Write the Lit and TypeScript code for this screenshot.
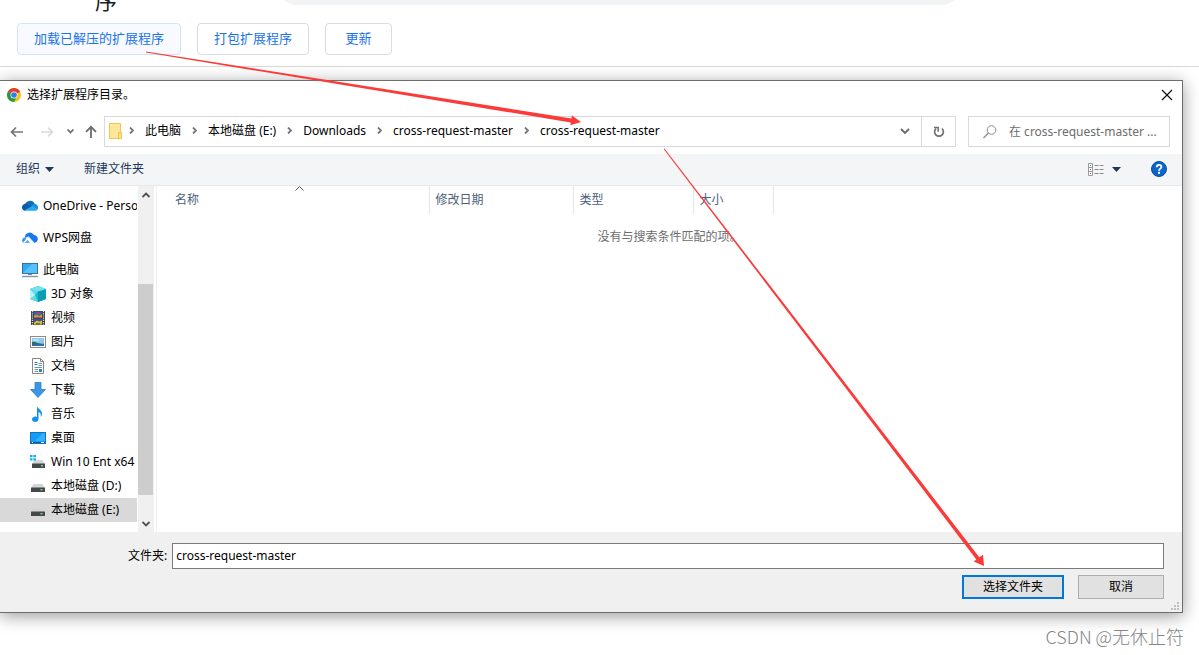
import { LitElement, html, css, svg } from "lit";
import { customElement, property } from "lit/decorators.js";

const icons: Record<string, unknown> = {
  onedrive: svg`<path d="M6 3.2a4.8 4.8 0 0 1 6.6 2.6L9 9 3.4 5.6A4.8 4.8 0 0 1 6 3.2z" fill="#0f6cbd"/><path d="M0 10.2a4 4 0 0 1 5.5-4.3l5 3-8 3.8A3.8 3.8 0 0 1 0 10.2z" fill="#0a5ba8"/><path d="M9.5 8l2.8-2.3c2.3 0 3.7 1.8 3.7 3.8 0 .8-.2 1.4-.6 2z" fill="#1490df"/><path d="M2 12.6L10 8l5.6 3.2c-.6 1-1.5 1.6-2.8 1.6H4c-.8 0-1.4 0-2-.2z" fill="#28a8ea"/>`,
  wps: svg`<path d="M3 7.500A4.800 4.800 0 0 1 12 5a4 4 0 0 1 3.500 5.500c-.5 1.500-2 2.500-4 2.500L6 7z" fill="#1677f0"/><path d="M0 10.500A3.300 3.300 0 0 1 4.500 7.500L2 12.800A3 3 0 0 1 0 10.500z" fill="#3d95ff"/><path d="M2 13L5.300 9.500 8 13z" fill="#5aa8ff"/><path d="M6 6.500l6 6.500M5.600 9L2 12.500" stroke="#fff" stroke-width="1.100"/>`,
  pc: svg`<rect x=".5" y="1.5" width="15" height="10" fill="#2fa8f6" stroke="#3b7299"/><path d="M1 11L10 2h5v9z" fill="#58c1ff"/><path d="M6 12h4v1H6z" fill="#6f8796"/><path d="M0 14.5h16" stroke="#7b97a9" stroke-width="1.4"/>`,
  cube: svg`<path d="M8 0l8 3v10l-8 3-8-3V3z" fill="#1ebbd0"/><path d="M8 5l8-2v10l-8 3z" fill="#079fb6"/><path d="M0 3l8-3 8 3-8 2.4z" fill="#74e3ee"/><path d="M0 3l8 2.3L5 9l3 7-8-3z" fill="#65d8e5"/><path d="M0 3l5 6-5 4z" fill="#b9f2f5"/>`,
  video: svg`<rect x="1" y="1" width="14" height="14" fill="#3d3d40"/><path d="M2.5 1v14M13.5 1v14" stroke="#d8d8d8" stroke-width="1.3" stroke-dasharray="1.2 1"/><rect x="4" y="1.5" width="8" height="6" fill="#2467b5"/><path d="M4 5.500l3-1L9 6l3-2v3.500H4z" fill="#e38b28"/><path d="M7 2.500h3v1.500H7z" fill="#e6362d"/><rect x="4" y="8.500" width="8" height="6" fill="#3152a8"/><path d="M4 12.500l3-2 2 1 3-1v4H4z" fill="#f1b12b"/><path d="M6 13h4v1.500H6z" fill="#3b8d35"/>`,
  picture: svg`<rect x=".5" y="2.500" width="15" height="11" fill="#fff" stroke="#8d8d8d"/><rect x="2" y="4" width="12" height="8" fill="#8cc9f2"/><path d="M2 8c3-1 4 .5 6 1s4 1 6 .5V12H2z" fill="#2f6f68"/><path d="M2 11c4-1 8-1 12-1v2H2z" fill="#2f6fb0"/><path d="M3 5.500h6v1H3z" fill="#e4f4ff"/>`,
  doc: svg`<path d="M2.500.5h8l3 3v12h-11z" fill="#fff" stroke="#858585"/><path d="M10.500.5v3h3" fill="none" stroke="#858585"/><path d="M4.500 6.500h3M4.500 4.500h3" stroke="#237fc4"/><path d="M8.500 5.500H12M8.500 7.500H12M4.500 9.500H12M4.500 11.500H8M4.500 13.500H8" stroke="#6d93b3"/><rect x="9" y="11" width="3" height="3" fill="#2c82c8"/>`,
  download: svg`<path d="M5 .5h6v7h4.500L8 15.500.5 7.500H5z" fill="#3b97e3" stroke="#2c7cc4" stroke-width=".8"/>`,
  music: svg`<path d="M7 0c.5 3 5.500 3.500 5 8.500-.2 1.200-.8 2-1.500 2.500 1-3-.5-4.500-2-5V13c0 4-6.500 3.500-6.500.5C2 11 5 10 7 11z" fill="#1093ec"/>`,
  desktop: svg`<rect x=".5" y="2.500" width="15" height="11" fill="#139bf5" stroke="#1374bd"/><path d="M5 11L13 3h2v8z" fill="#36b1ff"/><path d="M1 12.500h14" stroke="#0b5d9d"/><path d="M2 12.500h1M11 12.500h3" stroke="#fff"/>`,
  drive: svg`<path d="M3.500 6h9L15 10H1z" fill="#d5d5d7"/><rect x="1" y="9.500" width="14" height="4.500" rx=".5" fill="#45474a"/><rect x="10.500" y="11" width="2" height="1.500" fill="#5fe06d"/>`,
  windrive: svg`<path d="M4.500 6h8L15 10H2z" fill="#d5d5d7"/><rect x="2" y="9.500" width="13" height="4.500" rx=".5" fill="#45474a"/><rect x="11" y="11" width="2" height="1.500" fill="#5fe06d"/><path d="M0 1h2.500v2.300H0zM3.300 1H6v2.300H3.300zM0 4.200h2.500v2.300H0zM3.300 4.200H6v2.300H3.300z" fill="#13b0f0"/>`,
  help: svg`<circle cx="8" cy="8" r="7.500" fill="#0a66c8" stroke="#074f9d"/><path d="M5.700 6.300c0-3.400 4.900-3.200 4.700-.3C10.300 7.600 8 7.700 8 9.700" fill="none" stroke="#fff" stroke-width="1.800"/><rect x="7" y="10.800" width="2" height="2" fill="#fff"/>`,
  view: svg`<path d="M.5 2.500h4v12h-4zM.5 6.500h4M.5 10.500h4" fill="#fff" stroke="#9a9a9a"/><path d="M2 4.500h1" stroke="#3c87d0"/><path d="M2 8.500h1" stroke="#3c87d0"/><path d="M2 12.500h1" stroke="#d33"/><path d="M6.500 4.500h4M11.500 4.500h4M6.500 8.500h4M11.500 8.500h4M6.500 12.500h4M11.500 12.500h4" stroke="#8a8a8a"/>`,
  back: svg`<path d="M14 8H2.500M7 3.500L2.500 8 7 12.500" fill="none" stroke="#757575" stroke-width="1.700"/>`,
  forward: svg`<path d="M2 8h11.500M9 3.500L13.500 8 9 12.500" fill="none" stroke="#dadada" stroke-width="1.700"/>`,
  up: svg`<path d="M8 14V2.800M3 7.800l5-5 5 5" fill="none" stroke="#6c6c6c" stroke-width="1.800"/>`,
  folder: svg`<path d="M1.500.5h11v15h-11z" fill="#ffe69b" stroke="#f0c64c"/><path d="M10.500 9.500h3v6h-3z" fill="#ffe08a" stroke="#f0c64c"/>`,
  refresh: svg`<path d="M5 4.500A4.400 4.400 0 1 0 11 4.500" fill="none" stroke="#707070" stroke-width="1.700"/><path d="M3 3.500h4.200v4.200" fill="none" stroke="#707070" stroke-width="1.500"/>`,
  search: svg`<circle cx="9.500" cy="6" r="4.300" fill="none" stroke="#8b8b8b"/><path d="M6.500 9l-5 5" stroke="#8b8b8b" stroke-width="1.300"/>`,
  close: svg`<path d="M3 3l10 10M13 3L3 13" stroke="#111" stroke-width="1.200"/>`,
  chrome: svg`<circle cx="8" cy="8" r="7" fill="#fbc116"/><path d="M8 8L1.940 4.500A7 7 0 0 1 14.060 4.500z" fill="#e33b2e"/><path d="M1.940 4.500A7 7 0 0 0 8 15l3-5.300L8 8z" fill="#279847"/><path d="M8 4.500h6.060L8 8z" fill="#e33b2e"/><circle cx="8" cy="8" r="3.500" fill="#fff"/><circle cx="8" cy="8" r="2.800" fill="#2f7de9"/>`,
};

@customElement("ui-icon")
class UiIcon extends LitElement {
  @property() name = "";
  static styles = css`
    :host { display: block; flex: none; width: 16px; height: 16px; }
    svg { display: block; }
  `;
  render() {
    return html`<svg width="16" height="16" viewBox="0 0 16 16" aria-hidden="true">${icons[this.name]}</svg>`;
  }
}

const chevron = (d: string, w: number, h: number, color: string) => html`
  <svg width=${w} height=${h} viewBox="0 0 ${w} ${h}" aria-hidden="true">
    <path d=${d} fill="none" stroke=${color} stroke-width="1.8"></path>
  </svg>`;

const caret = () => html`
  <svg width="9" height="5" viewBox="0 0 9 5" aria-hidden="true"><path d="M0 0h9L4.500 5z" fill="#1e395b"></path></svg>`;

const crumbs = ["此电脑", "本地磁盘 (E:)", "Downloads", "cross-request-master", "cross-request-master"];

const roots = [
  { icon: "onedrive", label: "OneDrive - Personal" },
  { icon: "wps", label: "WPS网盘" },
];

const places = [
  { icon: "cube", label: "3D 对象" },
  { icon: "video", label: "视频" },
  { icon: "picture", label: "图片" },
  { icon: "doc", label: "文档" },
  { icon: "download", label: "下载" },
  { icon: "music", label: "音乐" },
  { icon: "desktop", label: "桌面" },
  { icon: "windrive", label: "Win 10 Ent x64" },
  { icon: "drive", label: "本地磁盘 (D:)" },
  { icon: "drive", label: "本地磁盘 (E:)", selected: true },
];

@customElement("folder-dialog")
class FolderDialog extends LitElement {
  static styles = css`
    :host {
      display: block;
      background: #fff;
      border: 1px solid #6e6e6e;
      border-left: 0;
      box-shadow: 0 3px 16px rgba(0, 0, 0, 0.4);
      color: #000;
      font-size: 12px;
      line-height: 16px;
    }
    * { box-sizing: border-box; }
    button, input { font: inherit; color: inherit; }
    svg { display: block; flex: none; }
    .plain { display: flex; align-items: center; gap: 5px; border: 0; padding: 0; background: none; white-space: nowrap; }
    .title { display: flex; align-items: center; height: 28px; padding: 0 7px 0 6px; gap: 5px; }
    .title h2 { flex: 1; margin: 0; font-size: 12px; font-weight: 400; }
    .nav { display: flex; align-items: center; padding: 7px 12px 7px 9px; }
    .history { display: flex; align-items: center; gap: 14px; width: 95px; }
    .history .recent { width: 6px; margin-left: -2px; }
    .history .parent { margin-left: -4px; }
    .address { flex: 1; min-width: 0; display: flex; height: 31px; border: 1px solid #d9d9d9; }
    .path { flex: 1; min-width: 0; display: flex; align-items: center; gap: 11px; margin: 0; padding: 0 0 2px 3px; list-style: none; overflow: hidden; }
    .path li { display: flex; align-items: center; gap: 11px; white-space: nowrap; }
    .path .lead { width: 10px; }
    .drop { width: 32px; justify-content: center; }
    .reload { width: 34px; justify-content: center; border-left: 1px solid #d9d9d9; }
    .search { display: flex; align-items: center; width: 202px; height: 31px; margin-left: 12px; padding: 0 0 0 13px; border: 1px solid #d9d9d9; gap: 11px; }
    .search input { flex: 1; min-width: 0; border: 0; padding: 0; outline: 0; background: none; }
    .search input::placeholder { color: #6d6d6d; opacity: 1; }
    .tools { display: flex; align-items: center; height: 32px; padding: 0 15px 1px 16px; gap: 30px; background: #f4f5f7; border-bottom: 1px solid #e7e8ea; color: #1e395b; }
    .tools .end { margin-left: auto; gap: 8px; }
    .body { display: flex; height: 346px; }
    .side { width: 137px; overflow: hidden; padding-top: 8px; }
    .tree { margin: 0; padding: 0; list-style: none; }
    .node { display: flex; align-items: center; height: 24px; padding-left: 22px; gap: 5px; white-space: nowrap; color: #000; text-decoration: none; }
    .root { margin-bottom: 8px; }
    .child { padding-left: 30px; }
    .selected { background: #d9d9d9; }
    .scroll { display: flex; flex-direction: column; align-items: center; width: 16px; margin: 0 2px 0 1px; padding: 6px 0 5px; background: #f0f0f0; }
    .space { flex: 86; }
    .thumb { flex: 211; width: 16px; background: #cdcdcd; border-right: 1px solid #f0f0f0; }
    .gap { flex: 26; }
    .files { flex: 1; min-width: 0; border-left: 1px solid #f0f0f0; }
    table { width: 100%; table-layout: fixed; border-collapse: collapse; }
    th { height: 28px; padding: 0 0 0 6px; text-align: left; font-weight: 400; color: #4c607a; border-right: 1px solid #e5e5e5; position: relative; }
    th:first-child { padding-left: 18px; }
    th:last-child { border: 0; }
    .sort { position: absolute; top: 0; left: 138px; }
    .name { width: 272px; }
    .date { width: 144px; }
    .type { width: 120px; }
    .size { width: 80px; }
    .empty { height: 46px; padding: 0; text-align: center; color: #6d6d6d; }
    .foot { position: relative; padding: 11px 18px 13px 128px; background: #f0f0f0; }
    .field { display: flex; align-items: center; gap: 5px; }
    .field input { flex: 1; min-width: 0; height: 26px; padding: 0 3px 2px; border: 1px solid #7a7a7a; background: #fff; outline: 0; border-radius: 0; }
    .actions { display: flex; justify-content: flex-end; gap: 14px; margin-top: 6px; }
    .action { width: 86px; height: 24px; padding: 0; background: #e1e1e1; border: 1px solid #adadad; }
    .primary { width: 102px; border: 2px solid #0078d7; }
    .grip { position: absolute; right: 3px; bottom: 2px; }
  `;

  private node(item: { icon: string; label: string; selected?: boolean }, kind: string) {
    return html`<li>
      <a class="node ${kind} ${item.selected ? "selected" : ""}" href="#">
        <ui-icon name=${item.icon}></ui-icon><span>${item.label}</span>
      </a>
    </li>`;
  }

  render() {
    return html`
      <div class="title">
        <ui-icon name="chrome"></ui-icon>
        <h2>选择扩展程序目录。</h2>
        <button class="plain" aria-label="关闭"><ui-icon name="close"></ui-icon></button>
      </div>
      <div class="nav">
        <div class="history">
          <button class="plain" aria-label="后退"><ui-icon name="back"></ui-icon></button>
          <button class="plain" aria-label="前进"><ui-icon name="forward"></ui-icon></button>
          <button class="plain recent" aria-label="最近">${chevron("M.5 .5L3.5 3.500 6.500 .5", 7, 5, "#757575")}</button>
          <button class="plain parent" aria-label="上一级"><ui-icon name="up"></ui-icon></button>
        </div>
        <div class="address">
          <ul class="path">
            <li class="lead"><ui-icon name="folder"></ui-icon></li>
            ${crumbs.map((c) => html`<li>${chevron("M1 .5L4 3.500 1 6.500", 5, 7, "#757575")}<span>${c}</span></li>`)}
          </ul>
          <button class="plain drop" aria-label="展开">${chevron("M1 1L5 5 9 1", 10, 7, "#6a6a6a")}</button>
          <button class="plain reload" aria-label="刷新"><ui-icon name="refresh"></ui-icon></button>
        </div>
        <label class="search">
          <ui-icon name="search"></ui-icon>
          <input type="text" aria-label="搜索" placeholder="在 cross-request-master ..." />
        </label>
      </div>
      <div class="tools">
        <button class="plain">组织 ${caret()}</button>
        <button class="plain">新建文件夹</button>
        <button class="plain end" aria-label="视图"><ui-icon name="view"></ui-icon>${caret()}</button>
        <button class="plain" aria-label="帮助"><ui-icon name="help"></ui-icon></button>
      </div>
      <div class="body">
        <nav class="side">
          <ul class="tree">
            ${roots.map((r) => this.node(r, "root"))}
            ${this.node({ icon: "pc", label: "此电脑" }, "")}
            ${places.map((p) => this.node(p, "child"))}
          </ul>
        </nav>
        <div class="scroll">
          ${chevron("M.5 5L4 1.500 7.500 5", 9, 6, "#505050")}
          <div class="space"></div>
          <div class="thumb"></div>
          <div class="gap"></div>
          ${chevron("M.5 1L4 4.500 7.500 1", 9, 6, "#505050")}
        </div>
        <div class="files">
          <table>
            <thead>
              <tr>
                <th class="name">名称
                  <svg class="sort" width="9" height="5" viewBox="0 0 9 5" aria-hidden="true"><path d="M.5 4.500l4-4 4 4" fill="none" stroke="#555"></path></svg>
                </th>
                <th class="date">修改日期</th>
                <th class="type">类型</th>
                <th class="size">大小</th>
                <th></th>
              </tr>
            </thead>
            <tbody>
              <tr><td class="empty" colspan="5">没有与搜索条件匹配的项。</td></tr>
            </tbody>
          </table>
        </div>
      </div>
      <div class="foot">
        <div class="field">
          <label for="folder">文件夹:</label>
          <input id="folder" type="text" .value=${"cross-request-master"} />
        </div>
        <div class="actions">
          <button class="action primary">选择文件夹</button>
          <button class="action">取消</button>
        </div>
        <svg class="grip" width="8" height="8" viewBox="0 0 8 8" aria-hidden="true">
          <path d="M6 0h2v2H6zM3 3h2v2H3zM6 3h2v2H6zM0 6h2v2H0zM3 6h2v2H3zM6 6h2v2H6z" fill="#bfbfbf"></path>
        </svg>
      </div>
    `;
  }
}

@customElement("app-root")
class AppRoot extends LitElement {
  static styles = css`
    :host {
      display: block;
      position: relative;
      min-height: 100vh;
      overflow: hidden;
      background: #fff;
      font-family: "Noto Sans", "Noto Sans CJK SC", sans-serif;
    }
    * { box-sizing: border-box; }
    .head { display: flex; align-items: flex-end; height: 15px; padding-left: 95px; }
    .head h1 { flex: none; width: 182px; margin: 0; font-size: 22px; line-height: 30px; font-weight: 400; color: #202124; }
    .query { width: 62%; height: 40px; margin-bottom: 10px; border-radius: 20px; background: #f1f3f4; }
    .bar { display: flex; gap: 16px; padding: 8px 17px 11px; border-bottom: 1px solid #dadada; }
    .btn { height: 32px; min-width: 67px; padding: 0 16px 4px; border: 1px solid #dadce0; border-radius: 4px; background: #fff; color: #1a73e8; font: inherit; font-size: 13px; }
    .hover { background: #f8faff; border-color: #d2e3fc; }
    folder-dialog { margin: 13px 16px 0 0; }
    .mark { margin: 9px 15px 0; text-align: right; font-size: 18px; line-height: 28px; font-weight: 300; color: #858585; font-family: "Noto Sans CJK SC", sans-serif; }
    .arrows { position: absolute; left: 0; top: 0; pointer-events: none; }
  `;

  render() {
    return html`
      <header class="head"><h1>序</h1><div class="query"></div></header>
      <div class="bar">
        <button class="btn hover">加载已解压的扩展程序</button>
        <button class="btn">打包扩展程序</button>
        <button class="btn">更新</button>
      </div>
      <folder-dialog></folder-dialog>
      <p class="mark">CSDN @无休止符</p>
      <svg class="arrows" width="1199" height="655" viewBox="0 0 1199 655" aria-hidden="true">
        <g fill="#fb3b39">
          <path d="M146 51.600L571.400 118.400 571.900 115.500 581 122 570.300 125.300 570.800 122.400 146 52.600z"></path>
          <path d="M664.500 148.500L979.300 557.300 983 554.800 984 566 973.700 561.500 976.300 559.500 663.800 149.300z"></path>
        </g>
      </svg>
    `;
  }
}
